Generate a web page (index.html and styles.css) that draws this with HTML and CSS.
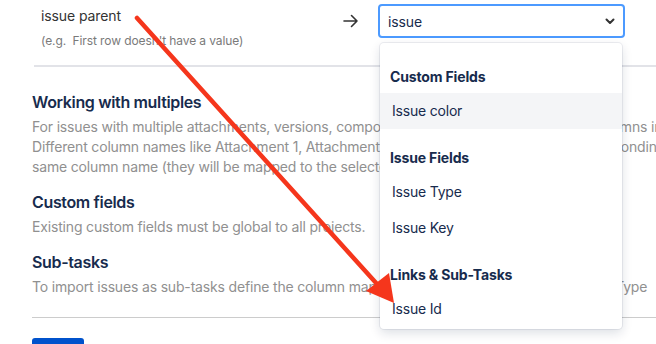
FILE: index.html
```html
<!DOCTYPE html>
<html lang="en">
<head>
    <meta charset="UTF-8">
    <meta name="viewport" content="width=device-width, initial-scale=1.0">
    <title>Import issues</title>
    <link rel="stylesheet" href="styles.css">
</head>
<body>
    <div class="page">
        <div class="mapping-row">
            <div class="field-name">
                <div class="field-label">issue parent</div>
                <div class="field-hint">(e.g.&nbsp; First row doesn't have a value)</div>
            </div>
            <div class="map-arrow">
                <svg width="16" height="14" viewBox="0 0 16 14">
                    <path d="M1 7 H14 M8.5 1.5 L14 7 L8.5 12.5" fill="none" stroke="#333" stroke-width="1.6" stroke-linecap="round" stroke-linejoin="round"/>
                </svg>
            </div>
            <div class="select-wrap">
                <div class="select">
                    <span class="select-value">issue</span>
                    <svg class="chevron" width="12" height="12" viewBox="0 0 12 12">
                        <path d="M2.5 4.5 L6 8 L9.5 4.5" fill="none" stroke="#333" stroke-width="2" stroke-linecap="round" stroke-linejoin="round"/>
                    </svg>
                </div>

                <div class="menu">
                    <div class="menu-group">
                        <div class="group-title">Custom Fields</div>
                        <div class="option focused">Issue color</div>
                    </div>
                    <div class="menu-group">
                        <div class="group-title">Issue Fields</div>
                        <div class="option">Issue Type</div>
                        <div class="option">Issue Key</div>
                    </div>
                    <div class="menu-group">
                        <div class="group-title">Links &amp; Sub-Tasks</div>
                        <div class="option">Issue Id</div>
                        <div class="option">Parent Id</div>
                    </div>
                </div>
            </div>
        </div>

        <div class="notes">
            <h3>Working with multiples</h3>
            <p>For issues with multiple attachments, versions, components or labels, just add multiple columns in the file.<br>
               Different column names like Attachment 1, Attachment 2 will both be mapped to the corresponding<br>
               same column name (they will be mapped to the selected field).</p>

            <h3>Custom fields</h3>
            <p>Existing custom fields must be global to all projects.</p>

            <h3>Sub-tasks</h3>
            <p>To import issues as sub-tasks define the column mapping for Issue Id, Parent Id and Issue Type</p>
        </div>

        <div class="actions">
            <button type="button" class="btn-primary">Next</button>
        </div>
    </div>

    <svg class="annotation" width="656" height="344" viewBox="0 0 656 344">
        <line x1="137" y1="18" x2="377" y2="284" stroke="#f5361c" stroke-width="4.5" stroke-linecap="round"/>
        <polygon points="394,303 366,291 389,273" fill="#f5361c"/>
    </svg>
</body>
</html>
```

FILE: styles.css
```css
body {
    margin: 0;
    padding: 0;
    font-family: Inter, "Noto Sans", sans-serif;
    background-color: #fff;
    overflow: hidden;
    width: 656px;
    height: 344px;
    position: relative;
}

.page {
    width: 900px;
    padding-left: 32px;
}

/* field mapping row */
.mapping-row {
    display: flex;
    margin-left: 2px;
    padding: 4px 0 16px 7px;
    border-bottom: 2px solid #e2e3e8;
}

.field-name {
    width: 302px;
    padding-top: 2px;
}

.field-label {
    font-size: 14px;
    line-height: 20px;
    color: #333;
    letter-spacing: -0.1px;
}

.field-hint {
    margin-top: 7px;
    font-size: 12px;
    line-height: 16px;
    color: #7a7a7a;
    letter-spacing: -0.1px;
}

.map-arrow {
    width: 16px;
    height: 34px;
    display: flex;
    align-items: center;
    margin-right: 19px;
}

.select-wrap {
    position: relative;
}

.select {
    box-sizing: border-box;
    width: 247px;
    height: 34px;
    border: 2px solid #4c9aff;
    border-radius: 4px;
    background-color: #fff;
    display: flex;
    align-items: center;
    justify-content: space-between;
    padding: 0 8px 0 8px;
}

.select-value {
    font-size: 14px;
    color: #172b4d;
    letter-spacing: -0.1px;
}

.chevron {
    margin-right: -1px;
}

/* dropdown menu */
.menu {
    position: absolute;
    top: 39px;
    left: 2px;
    width: 242px;
    height: 286px;
    overflow: hidden;
    background-color: #fff;
    border-radius: 4px;
    box-shadow: 0 0 0 1px rgba(9, 30, 66, 0.07), 0 4px 11px rgba(9, 30, 66, 0.14);
    padding-top: 12px;
    box-sizing: border-box;
    z-index: 2;
}

.menu-group {
    padding: 12px 0 7px;
}

.menu-group:first-child {
    padding-top: 12px;
}

.group-title {
    font-size: 14px;
    font-weight: 700;
    line-height: 20px;
    color: #172b4d;
    padding-left: 10px;
    margin-bottom: 6px;
    letter-spacing: -0.15px;
}

.option {
    font-size: 14px;
    line-height: 20px;
    padding: 8px 12px;
    color: #172b4d;
    letter-spacing: -0.2px;
}

.option.focused {
    background-color: #f4f5f7;
}

/* help text */
.notes {
    padding-top: 25px;
}

.notes h3 {
    margin: 15px 0 0;
    font-size: 16px;
    font-weight: 600;
    line-height: 20px;
    color: #172b4d;
    letter-spacing: -0.35px;
}

.notes h3:first-child {
    margin-top: 0;
}

.notes p {
    margin: 5px 0 0;
    font-size: 14px;
    line-height: 20px;
    color: #909090;
    white-space: nowrap;
    letter-spacing: -0.17px;
}

.actions {
    margin-top: 20px;
    border-top: 1px solid #cccccc;
    padding-top: 20px;
}

.btn-primary {
    background-color: #0052cc;
    color: #fff;
    border: none;
    border-radius: 3px;
    width: 52px;
    height: 32px;
    font-family: inherit;
    font-size: 14px;
    cursor: pointer;
}

.annotation {
    position: absolute;
    top: 0;
    left: 0;
    pointer-events: none;
    z-index: 5;
}
```
